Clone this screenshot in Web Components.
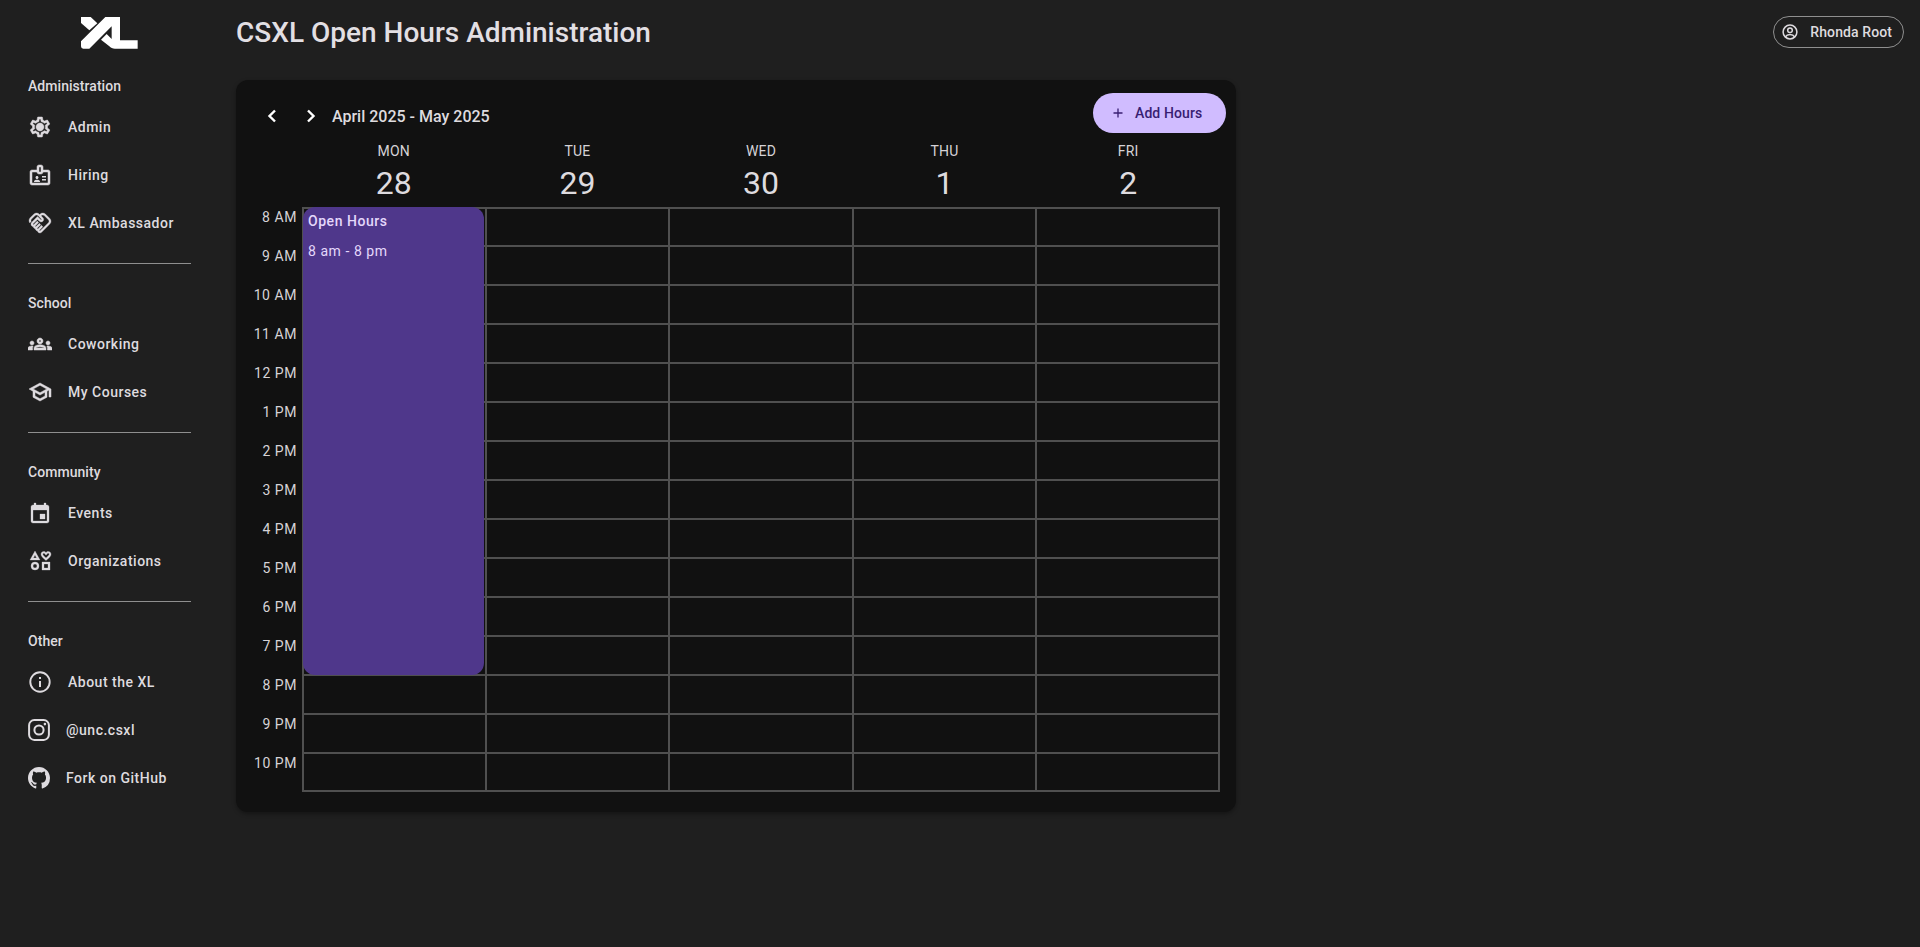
<!DOCTYPE html>
<html><head><meta charset="utf-8">
<style>
html,body{margin:0;height:100%}
body{background:#1f1f1f;color:#e6e1e5;font-family:Roboto,"Liberation Sans",sans-serif;overflow:hidden}
</style></head>
<body>
<app-shell>
  <side-nav slot="nav">
    <nav-group label="Administration">
      <nav-item icon="gear" label="Admin"></nav-item>
      <nav-item icon="badge" label="Hiring"></nav-item>
      <nav-item icon="hands" label="XL Ambassador"></nav-item>
    </nav-group>
    <nav-group label="School">
      <nav-item icon="groups" label="Coworking"></nav-item>
      <nav-item icon="school" label="My Courses"></nav-item>
    </nav-group>
    <nav-group label="Community">
      <nav-item icon="event" label="Events"></nav-item>
      <nav-item icon="cat" label="Organizations"></nav-item>
    </nav-group>
    <nav-group label="Other" last>
      <nav-item icon="info" label="About the XL"></nav-item>
      <nav-item icon="insta" label="@unc.csxl" narrow></nav-item>
      <nav-item icon="github" label="Fork on GitHub" narrow></nav-item>
    </nav-group>
  </side-nav>
  <page-header title="CSXL Open Hours Administration" user="Rhonda Root"></page-header>
  <hours-calendar></hours-calendar>
</app-shell>
<script>
const ICONS={
gear:'<path class="h" fill="currentColor" d="M19.43 12.98c.04-.32.07-.64.07-.98 0-.34-.03-.66-.07-.98l2.11-1.65c.19-.15.24-.42.12-.64l-2-3.46c-.09-.16-.26-.25-.44-.25-.06 0-.12.01-.17.03l-2.49 1c-.52-.4-1.08-.73-1.69-.98l-.38-2.65C14.46 2.18 14.25 2 14 2h-4c-.25 0-.46.18-.49.42l-.38 2.65c-.61.25-1.17.59-1.69.98l-2.49-1c-.06-.02-.12-.03-.18-.03-.17 0-.34.09-.43.25l-2 3.46c-.13.22-.07.49.12.64l2.11 1.65c-.04.32-.07.65-.07.98 0 .33.03.66.07.98l-2.11 1.65c-.19.15-.24.42-.12.64l2 3.46c.09.16.26.25.44.25.06 0 .12-.01.17-.03l2.49-1c.52.4 1.08.73 1.69.98l.38 2.65c.03.24.24.42.49.42h4c.25 0 .46-.18.49-.42l.38-2.65c.61-.25 1.17-.59 1.69-.98l2.49 1c.06.02.12.03.18.03.17 0 .34-.09.43-.25l2-3.46c.12-.22.07-.49-.12-.64l-2.11-1.65zm-1.98-1.71c.04.31.05.52.05.73 0 .21-.02.43-.05.73l-.14 1.13.89.7 1.08.84-.7 1.21-1.27-.51-1.04-.42-.9.68c-.43.32-.84.56-1.25.73l-1.06.43-.16 1.13-.2 1.35h-1.4l-.19-1.35-.16-1.13-1.06-.43c-.43-.18-.83-.41-1.23-.71l-.91-.7-1.06.43-1.27.51-.7-1.21 1.08-.84.89-.7-.14-1.13c-.03-.31-.05-.54-.05-.74s.02-.43.05-.73l.14-1.13-.89-.7-1.08-.84.7-1.21 1.27.51 1.04.42.9-.68c.43-.32.84-.56 1.25-.73l1.06-.43.16-1.13.2-1.35h1.39l.19 1.35.16 1.13 1.06.43c.43.18.83.41 1.23.71l.91.7 1.06-.43 1.27-.51.7 1.21-1.07.85-.89.7.14 1.13zM12 8c-2.21 0-4 1.79-4 4s1.79 4 4 4 4-1.79 4-4-1.79-4-4-4z"/>',
badge:'<path class="h" fill="currentColor" fill-rule="evenodd" d="M20 7h-5V4c0-1.100-.9-2-2-2h-2c-1.100 0-2 .9-2 2v3H4c-1.100 0-2 .9-2 2v11c0 1.100.9 2 2 2h16c1.100 0 2-.9 2-2V9c0-1.100-.9-2-2-2zM11 4h2v5h-2zM20 20H4V9h5c0 1.100.9 2 2 2h2c1.100 0 2-.9 2-2h5z"/><path fill="currentColor" d="M9 16c.83 0 1.500-.67 1.500-1.500S9.830 13 9 13s-1.500.67-1.500 1.500S8.170 16 9 16zm2.080 1.180c-.64-.28-1.340-.43-2.080-.43s-1.440.15-2.080.43C6.360 17.420 6 17.970 6 18.570V19h6v-.43c0-.6-.36-1.150-.92-1.390zM14 13h4v1.500h-4zM14 16h4v1.500h-4z"/>',
hands:'<path class="s" fill="currentColor" d="M12.22 19.85c-.18.18-.5.21-.71 0-.18-.18-.21-.5 0-.71l3.39-3.39-1.41-1.41-3.39 3.39c-.19.2-.51.19-.71 0-.21-.21-.18-.53 0-.71l3.39-3.39-1.41-1.41-3.39 3.39c-.18.18-.5.21-.71 0-.19-.19-.19-.51 0-.71l3.39-3.39-1.42-1.41-3.39 3.39c-.18.18-.5.21-.71 0-.19-.2-.19-.51 0-.71L9.52 8.4l1.87 1.86c.95.95 2.59.94 3.54 0 .98-.98.98-2.56 0-3.54l-1.86-1.86.28-.28c.78-.78 2.05-.78 2.83 0l4.24 4.24c.78.78.78 2.05 0 2.83l-8.2 8.2zm9.61-6.78c1.56-1.56 1.56-4.09 0-5.66l-4.24-4.24c-1.56-1.56-4.09-1.56-5.66 0l-.28.28-.28-.28c-1.56-1.56-4.09-1.56-5.66 0L2.17 6.71C.76 8.12.63 10.34 1.77 11.9l1.45-1.45c-.39-.75-.26-1.7.37-2.33l3.54-3.54c.78-.78 2.05-.78 2.83 0l3.56 3.56c.18.18.21.5 0 .71-.21.21-.53.18-.71 0L9.52 5.57l-5.8 5.79c-.98.97-.98 2.56 0 3.54.39.39.89.63 1.42.7.07.52.3 1.02.7 1.42.4.4.9.63 1.42.7.07.52.3 1.02.7 1.42.4.4.9.63 1.42.7.07.54.31 1.03.7 1.42.47.47 1.1.73 1.77.73.67 0 1.3-.26 1.77-.73l8.21-8.19z"/>',
groups:'<path class="h" fill="currentColor" d="M4 13c1.100 0 2-.9 2-2s-.9-2-2-2-2 .9-2 2 .9 2 2 2zm1.130 1.100c-.37-.06-.74-.1-1.130-.1-.99 0-1.930.21-2.780.58C.48 14.900 0 15.620 0 16.430V18h4.500v-1.610c0-.83.23-1.610.63-2.290zM20 13c1.100 0 2-.9 2-2s-.9-2-2-2-2 .9-2 2 .9 2 2 2zm4 3.430c0-.81-.48-1.530-1.220-1.850-.85-.37-1.790-.58-2.780-.58-.39 0-.76.04-1.130.1.4.68.63 1.460.63 2.290V18H24v-1.570zm-7.760-2.780c-1.170-.52-2.610-.9-4.240-.9-1.630 0-3.070.39-4.240.9C6.680 14.130 6 15.210 6 16.390V18h12v-1.610c0-1.180-.68-2.260-1.760-2.740zM8.070 16c.09-.23.13-.39.91-.69.97-.38 1.990-.56 3.020-.56s2.050.18 3.020.56c.77.3.81.46.91.69H8.070zM12 8c.55 0 1 .45 1 1s-.45 1-1 1-1-.45-1-1 .45-1 1-1m0-2c-1.660 0-3 1.340-3 3s1.340 3 3 3 3-1.340 3-3-1.340-3-3-3z"/>',
school:'<path class="h" fill="currentColor" d="M12 3 1 9l4 2.180v6L12 21l7-3.820v-6l2-1.090V17h2V9L12 3zm6.820 6L12 12.720 5.180 9 12 5.280 18.820 9zM17 15.990l-5 2.730-5-2.730v-3.720L12 15l5-2.730v3.720z"/>',
event:'<path class="s" fill="currentColor" d="M17 12h-5v5h5v-5zM16 1v2H8V1H6v2H5c-1.110 0-1.990.9-1.990 2L3 19c0 1.100.89 2 2 2h14c1.100 0 2-.9 2-2V5c0-1.100-.9-2-2-2h-1V1h-2zm3 18H5V8h14v11z" transform="translate(0 1)"/>',
cat:'<path class="s" fill="currentColor" fill-rule="evenodd" d="M7 2 12 11H2zM7 6.100 5.400 9h3.200zM15.800 2.500c1 0 1.700.5 2.200 1.200.5-.7 1.200-1.200 2.200-1.200C21.900 2.500 23 3.700 23 5.300c0 2-2 3.600-5 6.200-3-2.600-5-4.200-5-6.200C13 3.700 14.100 2.500 15.800 2.500zM18 8.900c1.900-1.600 3.200-2.700 3.200-3.600 0-.6-.4-1-1-1-.7 0-1.300.6-1.700 1.500h-1c-.4-.9-1-1.500-1.700-1.500-.6 0-1 .4-1 1 0 .9 1.300 2 3.200 3.600zM7 13a4 4 0 1 1 0 8 4 4 0 0 1 0-8zM7 15a2 2 0 1 0 0 4 2 2 0 0 0 0-4zM14 13h8v8h-8zM16 15v4h4v-4z"/>',
info:'<circle cx="12" cy="12" r="9.700" fill="none" stroke="currentColor" stroke-width="1.900"/><path fill="currentColor" d="M11 11h2v6h-2zM11 7h2v2h-2z"/>',
insta:'<rect x="1.100" y="1.100" width="19.800" height="19.800" rx="5.200" fill="none" stroke="currentColor" stroke-width="2"/><circle cx="11" cy="11" r="4.600" fill="none" stroke="currentColor" stroke-width="2"/><circle cx="16.900" cy="5.100" r="1.300" fill="currentColor"/>',
github:'<path transform="scale(1.375)" fill="currentColor" d="M8 0C3.580 0 0 3.580 0 8c0 3.540 2.290 6.530 5.470 7.590.4.07.55-.17.55-.38 0-.19-.01-.82-.01-1.490-2.010.37-2.530-.49-2.690-.94-.09-.23-.48-.94-.82-1.130-.28-.15-.68-.52-.01-.53.63-.01 1.080.58 1.230.82.72 1.210 1.870.87 2.330.66.07-.52.28-.87.51-1.070-1.780-.2-3.640-.89-3.640-3.950 0-.87.31-1.590.82-2.150-.08-.2-.36-1.020.08-2.120 0 0 .67-.21 2.200.82.64-.18 1.320-.27 2-.27s1.360.09 2 .27c1.530-1.040 2.200-.82 2.200-.82.44 1.100.16 1.920.08 2.120.51.56.82 1.270.82 2.150 0 3.070-1.870 3.750-3.650 3.950.29.25.54.73.54 1.480 0 1.070-.01 1.930-.01 2.200 0 .21.15.46.55.38A8.013 8.013 0 0016 8c0-4.420-3.580-8-8-8z"/>'
};
function def(name,css,html){
  customElements.define(name,class extends HTMLElement{
    constructor(){super();this.attachShadow({mode:'open'});}
    connectedCallback(){
      const a=n=>this.getAttribute(n);
      this.shadowRoot.innerHTML='<style>'+css+'</style>'+html(a,this);
    }
  });
}
def('app-shell',`:host{display:grid;grid-template-columns:236px 1000px 1fr;grid-template-rows:80px auto;height:947px;width:1920px}
::slotted(side-nav){grid-row:1/3}
::slotted(page-header){grid-column:2/4}
`,()=>'<slot name="nav"></slot><slot></slot>');
def('side-nav',`:host{display:block;box-sizing:border-box;width:236px;padding:17px 0 0 28px}
svg{display:block;margin:0 0 20px 53px}`,
()=>`<svg width="57" height="32" viewBox="243 52 171 96" fill="#fff">
<path d="M243 52H272L292 71 268 92 243 70Z"/>
<path d="M243 125 316 52H360V122H413V147H345C338 147 332 144 328 140L303 120 320 103 335 118V80L268 147H250Q243 147 243 140Z"/>
</svg><slot></slot>`);
def('nav-group',`:host{display:block;width:163px}
.l{height:34px;line-height:34px;font-size:14px;font-weight:500;letter-spacing:.05px;color:#dedbdf}
hr{border:0;height:1px;background:#8f8f8f;margin:16px 0 22px}`,
(a,t)=>`<div class="l">${a('label')}</div><slot></slot>${t.hasAttribute('last')?'':'<hr>'}`);
def('nav-item',`:host{display:flex;align-items:center;height:48px;white-space:nowrap;font-size:14px;font-weight:500;letter-spacing:.5px;color:#dedbdf}
svg{flex:none;display:block;margin-right:16px}
.h{stroke:currentColor;stroke-width:.5}
.s{stroke:currentColor;stroke-width:.3}`,
(a,t)=>{const s=t.hasAttribute('narrow')?22:24;
 return `<svg width="${s}" height="${s}" viewBox="0 0 ${s} ${s}">${ICONS[a('icon')]}</svg><span>${a('label')}</span>`;});
def('page-header',`:host{display:flex;justify-content:space-between;align-items:flex-start;height:64px}
h1{margin:0;font-size:28px;line-height:66px;font-weight:500;color:#e2dfe3;letter-spacing:0}
.wrap{margin-right:16px;margin-top:16px}`,
a=>`<h1>${a('title')}</h1><div class="wrap"><user-chip>${a('user')}</user-chip></div>`);
def('user-chip',`:host{display:flex;box-sizing:border-box;align-items:center;gap:11px;height:32px;padding:0 11px 0 7px;border:1px solid #8f8f8f;border-radius:16px;font-size:14px;font-weight:500;letter-spacing:.1px;color:#dedbdf}
svg{display:block}`,
()=>`<svg width="18" height="18" viewBox="0 0 18 18" fill="none" stroke="currentColor" stroke-width="1.500"><circle cx="9" cy="9" r="6.900"/><circle cx="9" cy="7.200" r="2.300"/><path d="M4.300 14c1-1.600 2.800-2.400 4.700-2.400s3.700.8 4.700 2.400"/></svg><slot></slot>`);
def('hours-calendar',`:host{display:block;box-sizing:border-box;width:1000px;height:732px;background:#111;border-radius:12px;box-shadow:0 2px 4px rgba(0,0,0,.35);padding:13px 10px 0 0}
.top{display:flex;align-items:flex-start;height:47px;justify-content:space-between}
.nav{display:flex;align-items:center;height:40px;margin-top:3px}
.nav svg{display:block}
.range{margin-left:9px;font-size:16px;font-weight:500;color:#dedbdf}
cal-days,cal-grid{margin-left:66px}
`,()=>`<div class="top"><div class="nav">
<svg width="24" height="24" viewBox="0 0 24 24" style="margin-left:24px"><path d="M15 6.500 9.500 12l5.500 5.500" fill="none" stroke="#fff" stroke-width="2.400"/></svg>
<svg width="24" height="24" viewBox="0 0 24 24" style="margin-left:15px"><path d="M9 6.500 14.500 12 9 17.500" fill="none" stroke="#fff" stroke-width="2.400"/></svg>
<span class="range">April 2025 - May 2025</span></div>
<add-button>Add Hours</add-button></div>
<cal-days></cal-days><cal-grid></cal-grid>`);
def('add-button',`:host{display:flex;box-sizing:border-box;align-items:center;height:40px;width:133px;padding-left:18px;gap:10px;border-radius:20px;background:#d0bcff;color:#381e72;font-size:14px;font-weight:500;letter-spacing:.1px}
svg{display:block}`,()=>`<svg width="14" height="14" viewBox="0 0 14 14"><path d="M7 2.500v9M2.500 7h9" stroke="currentColor" stroke-width="1.300"/></svg><slot></slot>`);
def('cal-days',`:host{display:grid;grid-template-columns:repeat(5,183.6px);height:67px;text-align:center}
.d{font-size:14px;line-height:20px;padding-top:1px;letter-spacing:.2px;color:#d6d3d7}
.n{font-size:32px;line-height:44px;font-weight:400;color:#dedbdf}`,
()=>[['MON',28],['TUE',29],['WED',30],['THU',1],['FRI',2]].map(([d,n])=>`<div><div class="d">${d}</div><div class="n">${n}</div></div>`).join(''));
def('cal-grid',`:host{display:block;position:relative;width:918px;height:585px}
.g{display:grid;box-sizing:border-box;width:100%;height:100%;grid-template-columns:repeat(5,1fr);grid-template-rows:36px repeat(13,37px) 36px;gap:2px;padding:2px;background:#505050}
.g i{background:#111;display:block}
.t{position:absolute;right:calc(100% + 5px);font-size:14px;line-height:20px;letter-spacing:.55px;color:#d6d3d7;white-space:nowrap}
`,()=>{
 const hrs=['8 AM','9 AM','10 AM','11 AM','12 PM','1 PM','2 PM','3 PM','4 PM','5 PM','6 PM','7 PM','8 PM','9 PM','10 PM'];
 return '<div class="g">'+'<i></i>'.repeat(75)+'</div>'+
 hrs.map((h,i)=>`<div class="t" style="top:${i*39}px">${h}</div>`).join('')+
 `<cal-event title="Open Hours" time="8 am - 8 pm"></cal-event>`;
});
def('cal-event',`:host{position:absolute;left:1px;top:0;width:181px;height:468px;box-sizing:border-box;background:#4f378b;border-radius:12px;padding:4px 5px;color:#e4d8fb;font-size:14px;letter-spacing:.55px}
.a{font-weight:500;line-height:20px}.b{margin-top:10px;line-height:20px}`,
a=>`<div class="a">${a('title')}</div><div class="b">${a('time')}</div>`);
</script>
</body></html>
